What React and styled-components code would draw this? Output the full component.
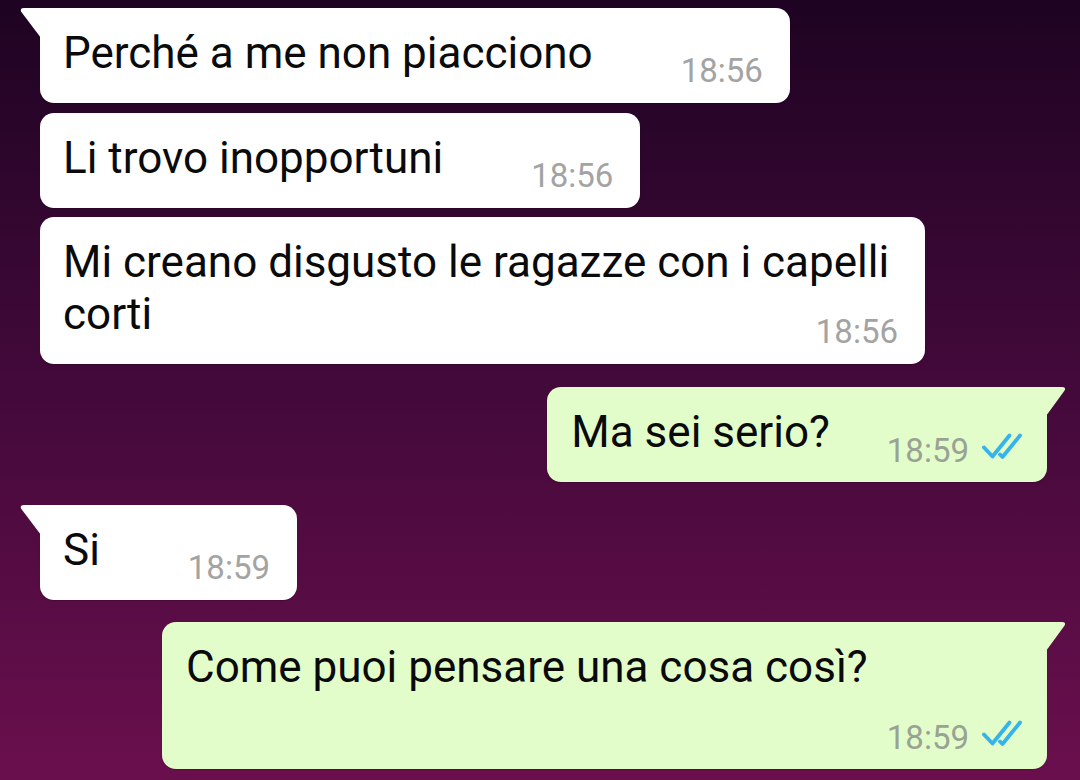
import React from 'react';
import styled, { createGlobalStyle, css } from 'styled-components';

const GlobalStyle = createGlobalStyle`
  html, body {
    margin: 0;
    padding: 0;
  }
  body {
    font-family: Roboto, "Liberation Sans", sans-serif;
    background: linear-gradient(180deg, #1e0322 0%, #43093a 50%, #6a0f4d 100%);
    min-height: 780px;
  }
`;

// Style
const Screen = styled.div`
  box-sizing: border-box;
  width: 1080px;
  height: 780px;
  padding: 8px 33px 0 40px;
  display: flex;
  flex-direction: column;
  overflow: hidden;
`;

const Bubble = styled.div`
  position: relative;
  display: flow-root;
  box-sizing: border-box;
  align-self: ${props => (props.$out ? 'flex-end' : 'flex-start')};
  max-width: 885px;
  margin-top: ${props => props.$gap}px;
  padding: ${props => (props.$out ? '19px 25px 16px 24px' : '19px 27px 16px 23px')};
  background: ${props => (props.$out ? '#e2fdca' : '#ffffff')};
  color: #0a0a0a;
  font-size: 44px;
  line-height: 52px;
  border-radius: 14px;
  box-shadow: 0 1px 1px rgba(0, 0, 0, 0.18);

  ${props =>
    props.$tail &&
    !props.$out &&
    css`
      border-top-left-radius: 0;
      &::before {
        content: '';
        position: absolute;
        top: 0;
        left: -20px;
        width: 21px;
        height: 30px;
        background: #ffffff;
        clip-path: path('M4 0 H21 V30 L1.2 3.8 Q-0.5 0 4 0 Z');
      }
    `}

  ${props =>
    props.$tail &&
    props.$out &&
    css`
      border-top-right-radius: 0;
      &::before {
        content: '';
        position: absolute;
        top: 0;
        right: -19px;
        width: 20px;
        height: 29px;
        background: #e2fdca;
        clip-path: path('M0 0 H16 Q20.5 0 18.6 3.6 L0 29 Z');
      }
    `}
`;

// time + ticks sit at the bottom right, next to the last line when it fits
const Meta = styled.span`
  float: right;
  height: 33px;
  margin-left: ${props => (props.$out ? 57 : 88)}px;
  margin-top: 27px;
  font-size: 33px;
  line-height: 33px;
  color: ${props => (props.$out ? '#9aa294' : '#a3a3a3')};
  white-space: nowrap;

  svg {
    margin-left: 13px;
    vertical-align: 1px;
  }
`;

const Ticks = () => (
  <svg width="40" height="28" viewBox="0 0 40 28" fill="none">
    <path
      d="M2 14.5 L10.5 23.5 L27.5 2.5"
      stroke="#35b3eb"
      strokeWidth="3.8"
      strokeLinecap="round"
      strokeLinejoin="round"
    />
    <path
      d="M18 21.5 L20.5 24 L38 2.5"
      stroke="#35b3eb"
      strokeWidth="3.8"
      strokeLinecap="round"
      strokeLinejoin="round"
    />
  </svg>
);

const messages = [
  { id: 1, out: false, tail: true, gap: 0, text: 'Perché a me non piacciono', time: '18:56' },
  { id: 2, out: false, tail: false, gap: 10, text: 'Li trovo inopportuni', time: '18:56' },
  {
    id: 3,
    out: false,
    tail: false,
    gap: 9,
    text: 'Mi creano disgusto le ragazze con i capelli corti',
    time: '18:56'
  },
  { id: 4, out: true, tail: true, gap: 23, text: 'Ma sei serio?', time: '18:59' },
  { id: 5, out: false, tail: true, gap: 23, text: 'Si', time: '18:59' },
  { id: 6, out: true, tail: true, gap: 22, text: 'Come puoi pensare una cosa così?', time: '18:59' }
];

const App = () => (
  <>
    <GlobalStyle />
    <Screen>
      {messages.map(m => (
        <Bubble key={m.id} $out={m.out} $tail={m.tail} $gap={m.gap}>
          {m.text}
          <Meta $out={m.out}>
            {m.time}
            {m.out && <Ticks />}
          </Meta>
        </Bubble>
      ))}
    </Screen>
  </>
);

export default App;
